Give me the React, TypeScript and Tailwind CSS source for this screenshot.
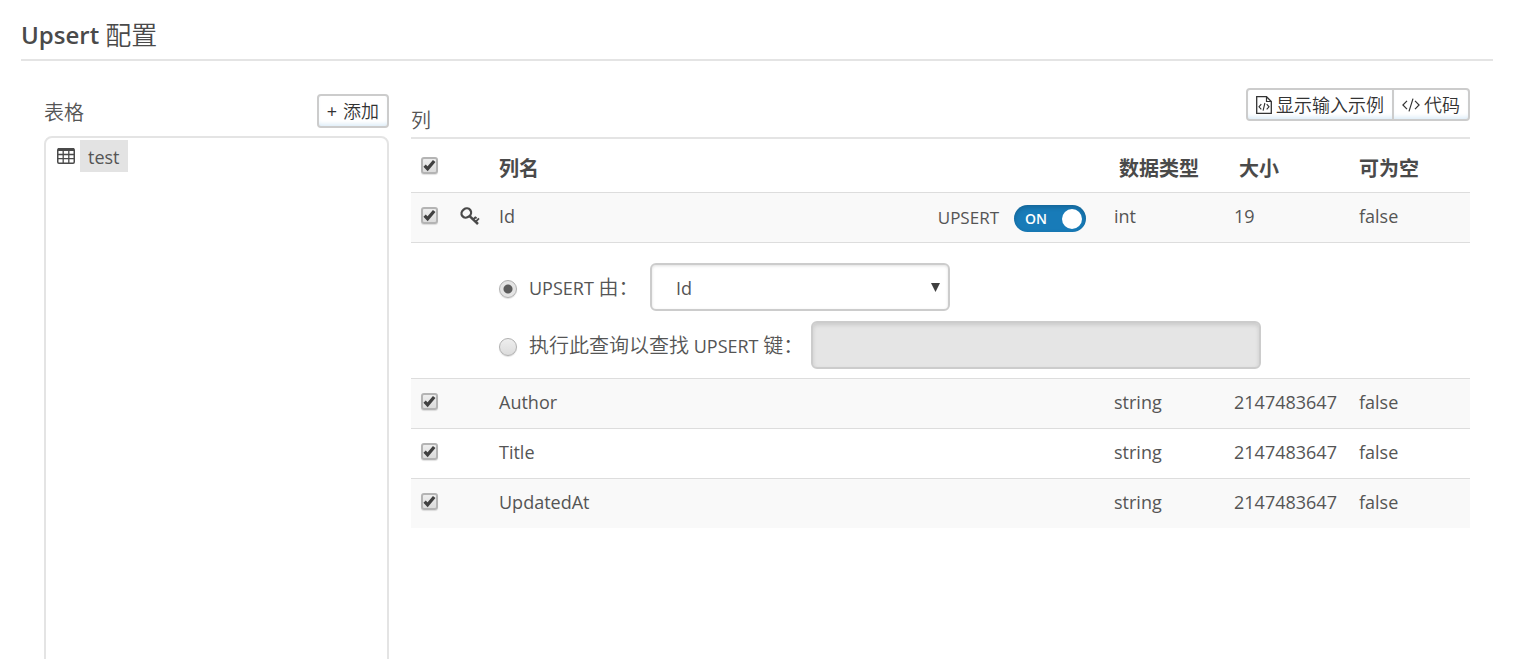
import { useState } from "react";
import type { ReactNode } from "react";

type Column = {
  name: string;
  type: string;
  size: string;
  nullable: string;
};

const columns: Column[] = [
  { name: "Author", type: "string", size: "2147483647", nullable: "false" },
  { name: "Title", type: "string", size: "2147483647", nullable: "false" },
  { name: "UpdatedAt", type: "string", size: "2147483647", nullable: "false" },
];

function TableIcon() {
  return (
    <svg className="h-4 w-[18px]" viewBox="0 0 18 16" fill="none" aria-hidden="true">
      <rect x="0.75" y="0.75" width="16.5" height="14.5" rx="1.2" stroke="#4a4a4a" strokeWidth="1.5" />
      <path d="M1 1.5h16" stroke="#4a4a4a" strokeWidth="3" />
      <path d="M1 6.5h16M1 10.7h16M6.2 2v13M11.8 2v13" stroke="#4a4a4a" strokeWidth="1.3" />
    </svg>
  );
}

function KeyIcon() {
  return (
    <svg className="h-5 w-5" viewBox="0 0 20 20" fill="none" stroke="#4a4a4a" aria-hidden="true">
      <ellipse cx="6.3" cy="7" rx="5" ry="4.4" transform="rotate(-38 6.3 7)" strokeWidth="2.3" />
      <path d="M9.6 10.2l8.4 7.8" strokeWidth="2.5" />
      <path d="M13.2 13.4l2.6-2.6M15.8 15.6l3.2-3.2M15.2 11.2l1.4 1.2" strokeWidth="1.8" />
    </svg>
  );
}

function FileCodeIcon() {
  return (
    <svg className="h-[18px] w-4" viewBox="0 0 16 18" fill="none" stroke="#333" aria-hidden="true">
      <path d="M.7.7h9.8l4.8 4.8v11.8H.7z" strokeWidth="1.3" />
      <path d="M10.5.9v4.6h4.6" strokeWidth="1.2" />
      <path d="M5.3 8.2L3 10.8l2.3 2.6M10.7 8.2l2.3 2.6-2.3 2.6M8.9 7l-1.8 7.6" strokeWidth="1.1" />
    </svg>
  );
}

function CodeIcon() {
  return (
    <svg className="h-4 w-[18px]" viewBox="0 0 18 16" fill="none" stroke="#333" strokeWidth="1.2" aria-hidden="true">
      <path d="M5 3.8L.9 8 5 12.2M13 3.8L17.1 8 13 12.2M11 1.6L7 14.4" />
    </svg>
  );
}

function Zh({ children }: { children: ReactNode }) {
  return (
    <span lang="zh-CN" className="text-xl leading-none font-[350]">
      {children}
    </span>
  );
}

function Checkbox({ label }: { label: string }) {
  return (
    <span className="relative block h-[17px] w-[17px]">
      <input
        type="checkbox"
        aria-label={label}
        defaultChecked
        className="peer block h-[17px] w-[17px] appearance-none rounded-[3px] border-2 border-[#b4b4b4] bg-linear-to-b from-[#eee] to-[#dcdcdc] shadow-[0_1px_1px_rgba(0,0,0,0.12)]"
      />
      <svg
        className="pointer-events-none absolute inset-0 hidden h-[17px] w-[17px] peer-checked:block"
        viewBox="0 0 17 17"
        fill="none"
        aria-hidden="true"
      >
        <path d="M3.6 8.7l3 3.1 6.6-7.8" stroke="#404040" strokeWidth="3.3" />
      </svg>
    </span>
  );
}

function Radio(props: { id: string; checked: boolean; onChange: () => void }) {
  return (
    <input
      type="radio"
      name="upsert-mode"
      {...props}
      className="mt-1 h-[18px] w-[18px] shrink-0 appearance-none rounded-full border border-[#b0b0b0] bg-linear-to-b from-[#eee] to-[#dcdcdc] shadow-[0_1px_1px_rgba(0,0,0,0.12)] checked:bg-[radial-gradient(circle,#5c5c5c_4px,#e4e4e4_5px)]"
    />
  );
}

const buttonStyle =
  "flex items-center border-2 border-[#ccc] bg-white px-2 text-lg leading-none text-[#333] shadow-[inset_0_-4px_4px_-2px_#dcecf8]";

export default function App() {
  const [mode, setMode] = useState<"column" | "query">("column");

  return (
    <div className="h-screen overflow-hidden bg-white pr-6 pl-[21px] font-['Open_Sans','Noto_Sans_CJK_SC',sans-serif] text-lg text-[#555]">
      <header className="border-b-2 border-[#e4e4e4] pt-4 pb-[5px]">
        <h1 className="flex h-[38px] items-center gap-1.5 text-2xl font-semibold text-[#4a4a4a]">
          Upsert
          <span lang="zh-CN" className="text-[26px] font-[350]">
            配置
          </span>
        </h1>
      </header>

      <main className="flex gap-[22px] px-[23px] pt-[27px]">
        <section className="w-[345px] shrink-0 pt-1.5">
          <div className="mb-2 flex h-[34px] items-center justify-between">
            <h2 className="pt-1">
              <Zh>表格</Zh>
            </h2>
            <button type="button" className={`${buttonStyle} h-[34px] gap-1.5 rounded`}>
              <span>+</span>
              <span lang="zh-CN" className="font-[350]">
                添加
              </span>
            </button>
          </div>
          <ul className="h-[600px] rounded-lg border-2 border-[#e4e4e4] pt-0.5 pl-[11px]">
            <li className="flex items-center gap-[5px]">
              <TableIcon />
              <a href="#test" className="flex h-8 items-center bg-[#e3e3e3] px-2 pt-0.5">
                test
              </a>
            </li>
          </ul>
        </section>

        <section className="min-w-0 flex-1">
          <div className="flex h-[51px] items-start justify-between border-b-2 border-[#e4e4e4]">
            <h2 className="flex h-7 items-center self-end pb-1">
              <Zh>列</Zh>
            </h2>
            <div className="flex">
              <button type="button" className={`${buttonStyle} h-[33px] gap-1 rounded-l`}>
                <FileCodeIcon />
                <span lang="zh-CN" className="font-[350]">
                  显示输入示例
                </span>
              </button>
              <button type="button" className={`${buttonStyle} -ml-0.5 h-[33px] gap-1 rounded-r`}>
                <CodeIcon />
                <span lang="zh-CN" className="font-[350]">
                  代码
                </span>
              </button>
            </div>
          </div>

          <table className="w-full table-fixed border-separate border-spacing-0 text-left [&_td]:border-t [&_td]:border-[#ddd]">
            <colgroup>
              <col className="w-[39px]" />
              <col className="w-[39px]" />
              <col />
              <col className="w-[120px]" />
              <col className="w-[125px]" />
              <col className="w-[121px]" />
            </colgroup>
            <thead>
              <tr className="h-[53px] text-xl text-[#4a4a4a] [&_th]:pt-1.5" lang="zh-CN">
                <td className="border-none! pl-2.5">
                  <Checkbox label="全选" />
                </td>
                <td className="border-none!" />
                <th className="pl-2.5">列名</th>
                <th className="pl-[15px]">数据类型</th>
                <th className="pl-[15px]">大小</th>
                <th className="pl-2.5">可为空</th>
              </tr>
            </thead>
            <tbody>
              <tr className="h-[50px] bg-[#f9f9f9]">
                <td className="pb-1 pl-2.5">
                  <Checkbox label="Id" />
                </td>
                <td className="pb-1 pl-2.5">
                  <KeyIcon />
                </td>
                <td className="pt-0.5 pr-[18px] pl-2.5">
                  <div className="flex items-center justify-between">
                    <span className="pb-1.5">Id</span>
                    <label className="flex items-center gap-[15px] text-[17px]">
                      UPSERT
                      <span className="relative flex h-[27px] w-[72px] items-center justify-between rounded-full bg-[#187bb8] pr-1 pl-[11px] shadow-[inset_0_2px_5px_rgba(0,0,0,0.2)]">
                        <input
                          type="checkbox"
                          role="switch"
                          defaultChecked
                          className="absolute inset-0 cursor-pointer appearance-none"
                        />
                        <span className="text-sm font-semibold text-white">ON</span>
                        <span className="h-5 w-5 rounded-full bg-white" />
                      </span>
                    </label>
                  </div>
                </td>
                <td className="pb-1 pl-2.5">int</td>
                <td className="pb-1 pl-2.5">19</td>
                <td className="pb-1 pl-2.5">false</td>
              </tr>
              <tr>
                <td colSpan={2} />
                <td colSpan={4} className="pt-5 pb-[9px] pl-2.5">
                  <div className="flex flex-col gap-2.5">
                    <div className="flex items-center">
                      <Radio id="by-column" checked={mode === "column"} onChange={() => setMode("column")} />
                      <label htmlFor="by-column" className="ml-3 w-[121px] pt-0.5 whitespace-nowrap">
                        UPSERT <Zh>由：</Zh>
                      </label>
                      <div className="relative w-[300px]">
                        <select
                          aria-label="UPSERT"
                          className="block h-12 w-full appearance-none rounded-md border-2 border-[#ccc] bg-white pt-0.5 pl-6 shadow-[inset_0_1px_3px_rgba(0,0,0,0.12)]"
                        >
                          <option>Id</option>
                          <option>Author</option>
                          <option>Title</option>
                          <option>UpdatedAt</option>
                        </select>
                        <svg
                          className="pointer-events-none absolute top-5 right-2.5 h-[9px] w-[9px]"
                          viewBox="0 0 9 9"
                          aria-hidden="true"
                        >
                          <path d="M0 0h9L4.5 9z" fill="#404040" />
                        </svg>
                      </div>
                    </div>
                    <div className="flex items-center">
                      <Radio id="by-query" checked={mode === "query"} onChange={() => setMode("query")} />
                      <label htmlFor="by-query" className="ml-3 w-[282px] pt-0.5 whitespace-nowrap">
                        <Zh>执行此查询以查找</Zh> UPSERT <Zh>键：</Zh>
                      </label>
                      <input
                        type="text"
                        aria-label="UPSERT 键"
                        disabled={mode !== "query"}
                        className="h-12 w-[450px] rounded-md border-2 border-[#ccc] bg-white px-3 shadow-[inset_0_2px_4px_rgba(0,0,0,0.12)] disabled:bg-[#e5e5e5]"
                      />
                    </div>
                  </div>
                </td>
              </tr>
              {columns.map((column) => (
                <tr key={column.name} className="h-[50px] odd:bg-[#f9f9f9] [&_td]:pb-1">
                  <td className="pl-2.5">
                    <Checkbox label={column.name} />
                  </td>
                  <td />
                  <td className="pl-2.5">{column.name}</td>
                  <td className="pl-2.5">{column.type}</td>
                  <td className="pl-2.5">{column.size}</td>
                  <td className="pl-2.5">{column.nullable}</td>
                </tr>
              ))}
            </tbody>
          </table>
        </section>
      </main>
    </div>
  );
}
